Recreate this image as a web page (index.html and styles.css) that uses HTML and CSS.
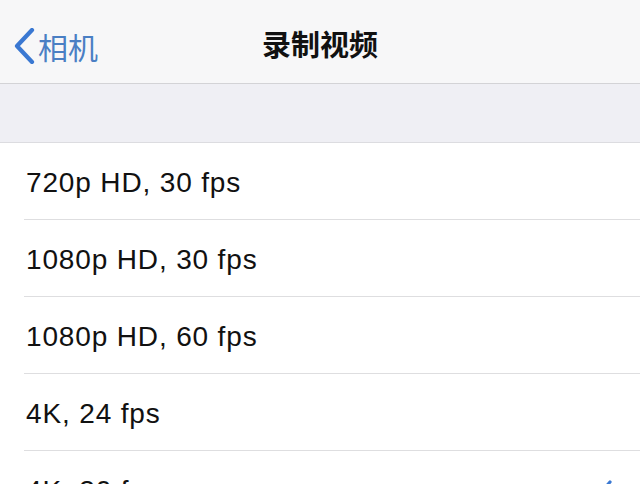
FILE: index.html
```html
<!DOCTYPE html>
<html lang="zh-CN">
  <head>
    <meta charset="UTF-8" />
    <meta name="viewport" content="width=device-width, initial-scale=1.0" />
    <title>录制视频</title>
    <link rel="stylesheet" href="styles.css">
  </head>
  <body>
    <!-- 导航栏 -->
    <div class="nav-bar">
      <div class="nav-back">
        <svg class="back-icon" width="22" height="36" viewBox="0 0 22 36">
          <path d="M19 2 L4 18 L19 34" fill="none" stroke="#3a78d2" stroke-width="4.2" stroke-linecap="round" stroke-linejoin="round" />
        </svg>
        <span class="back-text">相机</span>
      </div>
      <div class="nav-title">录制视频</div>
    </div>

    <div class="group-header"></div>

    <!-- 选项列表 -->
    <ul class="option-list">
      <li class="option"><span>720p HD, 30 fps</span></li>
      <li class="option"><span>1080p HD, 30 fps</span></li>
      <li class="option"><span>1080p HD, 60 fps</span></li>
      <li class="option"><span>4K, 24 fps</span></li>
      <li class="option">
        <span>4K, 30 fps</span>
        <svg class="check" width="24" height="20" viewBox="0 0 24 20">
          <path d="M2 11 L8.5 17.5 L22 2" fill="none" stroke="#3a78d2" stroke-width="3.2" stroke-linecap="round" stroke-linejoin="round" />
        </svg>
      </li>
    </ul>
  </body>
</html>
```

FILE: styles.css
```css
* {
  margin: 0;
  padding: 0;
  box-sizing: border-box;
}

body {
  font-family: "Liberation Sans", "Noto Sans CJK SC", sans-serif;
  background-color: #ffffff;
  color: #111;
  overflow: hidden;
}

.nav-bar {
  position: relative;
  height: 84px;
  background-color: #f7f7f8;
  border-bottom: 1px solid #d3d3d6;
  display: flex;
  align-items: center;
  justify-content: center;
}

.nav-back {
  position: absolute;
  left: 13px;
  top: 28px;
  display: flex;
  align-items: center;
  gap: 3px;
}

.back-text {
  font-family: "Noto Sans CJK SC", sans-serif;
  font-size: 30px;
  line-height: 36px;
  color: #4a7fc4;
}

.nav-title {
  font-family: "Noto Sans CJK SC", sans-serif;
  font-size: 29px;
  font-weight: bold;
  color: #111;
  margin-top: 2px;
}

.group-header {
  height: 59px;
  background-color: #efeff4;
  border-bottom: 1px solid #dcdce0;
}

.option-list {
  list-style: none;
}

.option {
  height: 77px;
  margin-left: 24px;
  padding-left: 2px;
  padding-right: 28px;
  padding-top: 3px;
  border-bottom: 1px solid #dedee0;
  display: flex;
  align-items: center;
  justify-content: space-between;
  font-size: 28px;
  letter-spacing: 0.85px;
}

.check {
  margin-top: -2px;
}
```
